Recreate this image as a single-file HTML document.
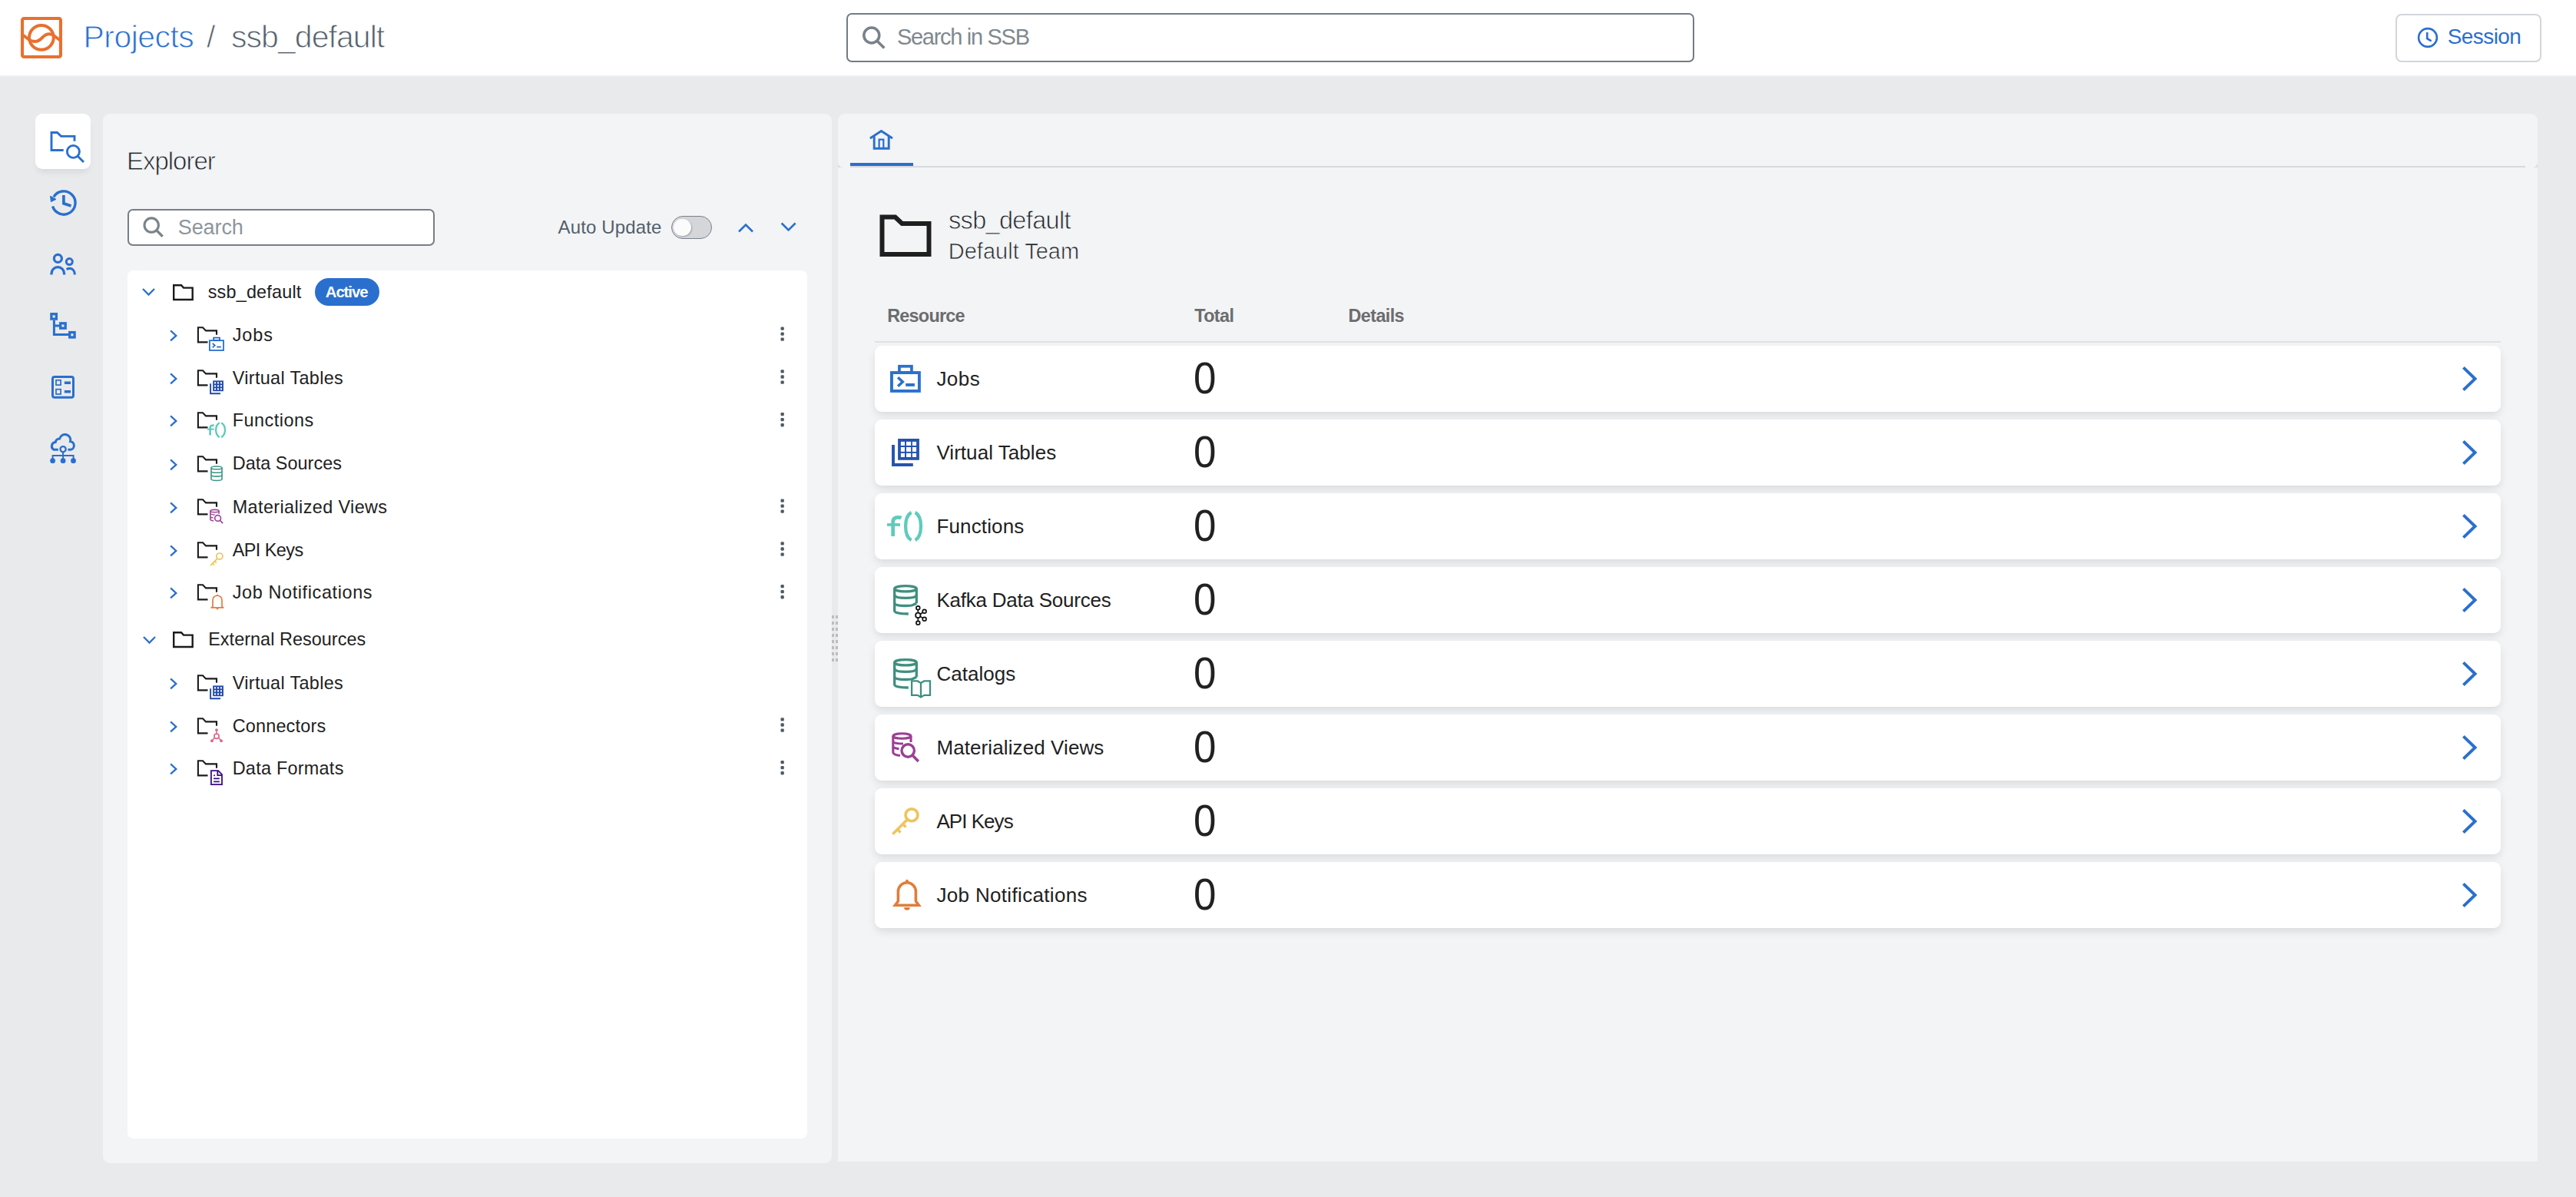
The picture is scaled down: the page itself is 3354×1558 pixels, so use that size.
<!DOCTYPE html>
<html><head><meta charset="utf-8"><title>SSB</title>
<style>
html,body{margin:0;padding:0;}
body{width:3354px;height:1558px;position:relative;overflow:hidden;background:#e9eaec;font-family:"Liberation Sans", sans-serif;}
.t{position:absolute;white-space:nowrap;line-height:1;}
svg{display:block;overflow:visible}
</style></head><body>
<div style="position:absolute;left:0px;top:0px;width:3354px;height:98px;background:#ffffff"></div>
<div style="position:absolute;left:0px;top:98px;width:3354px;height:2.3px;background:#eff0f2"></div>
<svg style="position:absolute;left:27px;top:22px;" width="54" height="54" viewBox="0 0 54 54"><rect x="2.05" y="2.05" width="49.9" height="49.9" rx="2.2" fill="none" stroke="#e8702e" stroke-width="4.1"/><circle cx="26.9" cy="26.8" r="15.9" fill="none" stroke="#e8702e" stroke-width="4"/><path d="M2,23 L10,29 C13,31.3 16,32 19,32 C23,32 25,30 28,27 C31,24 34,22.3 37,22.3 C40,22.3 42,23.3 44,25 L52,31" fill="none" stroke="#e8702e" stroke-width="4"/></svg>
<div class="t" style="left:108.5px;top:27.89px;font-size:41px;color:#2a6fce;font-weight:400;letter-spacing:-0.54px;-webkit-text-stroke:0.9px #fff">Projects</div>
<div class="t" style="left:269.0px;top:27.89px;font-size:41px;color:#56616c;font-weight:400;letter-spacing:0px;-webkit-text-stroke:0.9px #fff">/</div>
<div class="t" style="left:301.0px;top:27.89px;font-size:41px;color:#56616c;font-weight:400;letter-spacing:-0.95px;-webkit-text-stroke:0.9px #fff">ssb_default</div>
<div style="position:absolute;left:1102px;top:17px;width:1104px;height:64px;box-sizing:border-box;border:2px solid #737b83;border-radius:7px;background:#fff"></div>
<svg style="position:absolute;left:1120px;top:31px;" width="36" height="36" viewBox="0 0 36 36"><circle cx="14.8" cy="15" r="10" fill="none" stroke="#79818a" stroke-width="3.5"/><path d="M22.2,22.4 L31.3,31.5" stroke="#79818a" stroke-width="3.6"/></svg>
<div class="t" style="left:1168.0px;top:33.85px;font-size:29px;color:#80888f;font-weight:400;letter-spacing:-1.3px;">Search in SSB</div>
<div style="position:absolute;left:3119px;top:17.5px;width:190px;height:63px;box-sizing:border-box;border:2px solid #d3d5d9;border-radius:8px;background:#fff"></div>
<svg style="position:absolute;left:3144px;top:33px;" width="32" height="32" viewBox="0 0 32 32"><circle cx="17" cy="16" r="11.9" fill="none" stroke="#2a6fce" stroke-width="2.6"/><path d="M16.2,9 V17.2 L21.6,20.4" fill="none" stroke="#2a6fce" stroke-width="2.6"/></svg>
<div class="t" style="left:3186.8px;top:34.19px;font-size:28px;color:#2a6fce;font-weight:400;letter-spacing:-0.6px;">Session</div>
<div style="position:absolute;left:46px;top:148px;width:72px;height:72px;background:#fff;border-radius:9px;box-shadow:0 7px 8px -3px rgba(0,0,0,0.08)"></div>
<svg style="position:absolute;left:60px;top:165px;" width="55" height="55" viewBox="0 0 55 55"><path d="M37,18.8 V12.4 H19.5 L14.5,7.5 H7 V30.5 H22.7" fill="none" stroke="#2a6fce" stroke-width="2.9"/><circle cx="35.4" cy="32.4" r="8" fill="none" stroke="#2a6fce" stroke-width="2.9"/><path d="M41.2,38.2 L49,46" stroke="#2a6fce" stroke-width="2.9"/></svg>
<svg style="position:absolute;left:60px;top:240px;" width="45" height="45" viewBox="0 0 45 45"><path d="M8.55,28.6 A15.1,15.1 0 1 0 9.9,16.4" fill="none" stroke="#2a6fce" stroke-width="3.4"/><path d="M5.6,15.3 L6.4,22.6 L13,19.4 Z" fill="#2a6fce" stroke="#2a6fce" stroke-width="1"/><path d="M22.9,14.1 V24.8 L32.6,28" fill="none" stroke="#2a6fce" stroke-width="3.7"/></svg>
<svg style="position:absolute;left:60px;top:320px;" width="45" height="45" viewBox="0 0 45 45"><circle cx="15.4" cy="16.4" r="5" fill="none" stroke="#2a6fce" stroke-width="3.2"/><circle cx="30.3" cy="20.6" r="4" fill="none" stroke="#2a6fce" stroke-width="3"/><path d="M7,37.6 V36 A8.3,8.3 0 0 1 23.6,36 V37.6" fill="none" stroke="#2a6fce" stroke-width="3.3"/><path d="M26.6,30.6 C28,29.8 29.5,29.4 31,29.4 C34.7,29.4 37.3,32.5 37.3,37.6" fill="none" stroke="#2a6fce" stroke-width="3.1"/></svg>
<svg style="position:absolute;left:60px;top:400px;" width="45" height="45" viewBox="0 0 45 45"><rect x="6.9" y="8.7" width="6.5" height="6.4" fill="none" stroke="#2a6fce" stroke-width="3.3"/><rect x="18.7" y="20.8" width="6.5" height="6.4" fill="none" stroke="#2a6fce" stroke-width="3.3"/><rect x="30.7" y="32.6" width="6.4" height="6.4" fill="none" stroke="#2a6fce" stroke-width="3.3"/><path d="M10.4,16.7 V35.4 H29.1 M10.4,24 H17.1" fill="none" stroke="#2a6fce" stroke-width="3"/></svg>
<svg style="position:absolute;left:60px;top:482px;" width="45" height="45" viewBox="0 0 45 45"><rect x="8.5" y="8.5" width="27" height="26.8" rx="2.5" fill="none" stroke="#2a6fce" stroke-width="3"/><rect x="13" y="12.8" width="6.1" height="6.3" fill="none" stroke="#2a6fce" stroke-width="1.7"/><rect x="13" y="24.7" width="6.1" height="6.3" fill="none" stroke="#2a6fce" stroke-width="1.7"/><path d="M23.9,16.2 H32 M23.9,27.8 H32" stroke="#2a6fce" stroke-width="3.4"/></svg>
<svg style="position:absolute;left:58px;top:558px;" width="48" height="48" viewBox="0 0 48 48"><path d="M17.8,27.3 H12 A5.2,5.2 0 0 1 14.2,17.6 A5.5,5.5 0 0 1 19.6,12.9 A7.2,7.2 0 0 1 33.6,16.6 A5.4,5.4 0 0 1 33.8,27.3 H30.4" fill="none" stroke="#2a6fce" stroke-width="3"/><circle cx="24.1" cy="26.7" r="3.6" fill="none" stroke="#2a6fce" stroke-width="2.3"/><path d="M24.1,30.3 V40 M10.6,40 V35.1 H37.6 V40" fill="none" stroke="#2a6fce" stroke-width="2"/><circle cx="10.6" cy="41.7" r="3.4" fill="#2a6fce"/><circle cx="24.1" cy="41.7" r="3.4" fill="#2a6fce"/><circle cx="37.5" cy="41.7" r="3.4" fill="#2a6fce"/></svg>
<div style="position:absolute;left:134px;top:148px;width:949px;height:1366px;background:#f3f4f6;border-radius:9px"></div>
<div class="t" style="left:164.9px;top:193.46px;font-size:33px;color:#1d2228;font-weight:400;letter-spacing:-1.0px;-webkit-text-stroke:0.8px #f3f4f6">Explorer</div>
<div style="position:absolute;left:166px;top:272px;width:400px;height:48px;box-sizing:border-box;border:2px solid #767e86;border-radius:7px;background:#fff"></div>
<svg style="position:absolute;left:184px;top:281px;" width="32" height="32" viewBox="0 0 32 32"><circle cx="13.2" cy="12.1" r="9.2" fill="none" stroke="#7b848b" stroke-width="3.1"/><path d="M19.9,18.9 L27.7,26.7" stroke="#7b848b" stroke-width="3.4"/></svg>
<div class="t" style="left:231.8px;top:282.94px;font-size:27px;color:#8d959c;font-weight:400;letter-spacing:-0.1px;">Search</div>
<div class="t" style="left:726.5px;top:284.08px;font-size:24px;color:#535f6b;font-weight:400;letter-spacing:0.15px;">Auto Update</div>
<div style="position:absolute;left:874.4px;top:280.7px;width:52.7px;height:30.3px;box-sizing:border-box;border:1.7px solid #7a8189;border-radius:16px;background:#d5d6da"></div>
<div style="position:absolute;left:877px;top:284.5px;width:22.8px;height:22.8px;border-radius:50%;background:#fbfbfb;box-shadow:1px 1px 2px rgba(0,0,0,0.25)"></div>
<svg style="position:absolute;left:958px;top:284px;" width="28" height="24" viewBox="0 0 28 24"><path d="M4,17.5 L13,8.5 L22,17.5" fill="none" stroke="#2a6fce" stroke-width="2.6"/></svg>
<svg style="position:absolute;left:1013px;top:284px;" width="28" height="24" viewBox="0 0 28 24"><path d="M4.6,6.5 L13.6,15.5 L22.6,6.5" fill="none" stroke="#2a6fce" stroke-width="2.6"/></svg>
<div style="position:absolute;left:166px;top:352px;width:885px;height:1130px;background:#fff;border-radius:8px"></div>
<svg style="position:absolute;left:183.4px;top:371.8px;" width="22" height="16" viewBox="0 0 22 16"><path d="M3,4 L10.5,11.5 L18,4" fill="none" stroke="#2a6fce" stroke-width="2.3"/></svg>
<svg style="position:absolute;left:224.5px;top:369.5px;" width="30" height="24" viewBox="0 0 30 24"><path d="M1.2,1.2 H11 L14,4.6 H25.7 V20 H1.2 Z" fill="none" stroke="#1b1b1b" stroke-width="2.4"/></svg>
<div class="t" style="left:270.7px;top:368.99px;font-size:23.4px;color:#212121;font-weight:400;letter-spacing:0.2px;">ssb_default</div>
<div style="position:absolute;left:410px;top:362px;width:84px;height:36px;background:#2a6fce;border-radius:18px"></div>
<div class="t" style="left:423.8px;top:369.81px;font-size:20.3px;color:#fff;font-weight:700;letter-spacing:-1.05px;">Active</div>
<svg style="position:absolute;left:218.1px;top:426.7px;" width="16" height="20" viewBox="0 0 16 20"><path d="M4.1,3.4 L11.3,9.9 L4.1,16.4" fill="none" stroke="#2a6fce" stroke-width="2.3"/></svg>
<svg style="position:absolute;left:250px;top:420px;margin-top:-0.30px" width="50" height="50" viewBox="0 0 50 50"><path d="M32,15.7 V10.4 H18 L14,6.3 H7.9 V25.4 H20.5" fill="none" stroke="#1b1b1b" stroke-width="2.1"/><rect x="22.9" y="23.2" width="18.1" height="12.8" fill="none" stroke="#1f66c8" stroke-width="1.7"/><rect x="28.2" y="19.599999999999998" width="7.8" height="3.6" fill="none" stroke="#1f66c8" stroke-width="1.7"/><path d="M26.7,26.9 L29.8,29.599999999999998 L26.7,32.300000000000004" fill="none" stroke="#1f66c8" stroke-width="1.6"/><path d="M32.2,31.599999999999998 H37.8" stroke="#1f66c8" stroke-width="1.7"/></svg>
<div class="t" style="left:302.7px;top:424.69px;font-size:23.4px;color:#212121;font-weight:400;letter-spacing:0.97px;">Jobs</div>
<svg style="position:absolute;left:1016px;top:425px;" width="6" height="20" viewBox="0 0 6 20"><rect x="0.5" y="0.40" width="4.3" height="4.3" rx="1.3" fill="#4f5961"/><rect x="0.5" y="7.45" width="4.3" height="4.3" rx="1.3" fill="#4f5961"/><rect x="0.5" y="14.50" width="4.3" height="4.3" rx="1.3" fill="#4f5961"/></svg>
<svg style="position:absolute;left:218.1px;top:482.6px;" width="16" height="20" viewBox="0 0 16 20"><path d="M4.1,3.4 L11.3,9.9 L4.1,16.4" fill="none" stroke="#2a6fce" stroke-width="2.3"/></svg>
<svg style="position:absolute;left:250px;top:476px;margin-top:-0.40px" width="50" height="50" viewBox="0 0 50 50"><path d="M32,15.7 V10.4 H18 L14,6.3 H7.9 V25.4 H20.5" fill="none" stroke="#1b1b1b" stroke-width="2.1"/><rect x="27.2" y="19.4" width="13.7" height="13.8" fill="#2149ad"/><rect x="29.00" y="21.30" width="2.1" height="2.1" fill="#fff"/><rect x="29.00" y="25.30" width="2.1" height="2.1" fill="#fff"/><rect x="29.00" y="29.30" width="2.1" height="2.1" fill="#fff"/><rect x="32.95" y="21.30" width="2.1" height="2.1" fill="#fff"/><rect x="32.95" y="25.30" width="2.1" height="2.1" fill="#fff"/><rect x="32.95" y="29.30" width="2.1" height="2.1" fill="#fff"/><rect x="36.90" y="21.30" width="2.1" height="2.1" fill="#fff"/><rect x="36.90" y="25.30" width="2.1" height="2.1" fill="#fff"/><rect x="36.90" y="29.30" width="2.1" height="2.1" fill="#fff"/><path d="M24.1,23.2 V36.3 H37" fill="none" stroke="#2149ad" stroke-width="1.9"/></svg>
<div class="t" style="left:302.7px;top:480.59px;font-size:23.4px;color:#212121;font-weight:400;letter-spacing:0.35px;">Virtual Tables</div>
<svg style="position:absolute;left:1016px;top:480px;" width="6" height="20" viewBox="0 0 6 20"><rect x="0.5" y="1.30" width="4.3" height="4.3" rx="1.3" fill="#4f5961"/><rect x="0.5" y="8.35" width="4.3" height="4.3" rx="1.3" fill="#4f5961"/><rect x="0.5" y="15.40" width="4.3" height="4.3" rx="1.3" fill="#4f5961"/></svg>
<svg style="position:absolute;left:218.1px;top:538.3px;" width="16" height="20" viewBox="0 0 16 20"><path d="M4.1,3.4 L11.3,9.9 L4.1,16.4" fill="none" stroke="#2a6fce" stroke-width="2.3"/></svg>
<svg style="position:absolute;left:250px;top:531px;margin-top:0.30px" width="50" height="50" viewBox="0 0 50 50"><path d="M32,15.7 V10.4 H18 L14,6.3 H7.9 V25.4 H20.5" fill="none" stroke="#1b1b1b" stroke-width="2.1"/><path d="M23.6,35.5 V25.7 C23.6,23.5 25.5,22.5 28.7,22.5" fill="none" stroke="#5ccbb9" stroke-width="2.5"/><path d="M20,27.7 H28.8" stroke="#5ccbb9" stroke-width="1.9"/><path d="M35.7,19.2 C32,21.7 31.1,25.7 31.1,28.599999999999998 C31.1,31.7 32,35.7 35.7,38.2" fill="none" stroke="#5ccbb9" stroke-width="2.3"/><path d="M38.2,19.2 C42,21.7 43,25.7 43,28.599999999999998 C43,31.7 42,35.7 38.2,38.2" fill="none" stroke="#5ccbb9" stroke-width="2.3"/></svg>
<div class="t" style="left:302.7px;top:536.29px;font-size:23.4px;color:#212121;font-weight:400;letter-spacing:0.5px;">Functions</div>
<svg style="position:absolute;left:1016px;top:536px;" width="6" height="20" viewBox="0 0 6 20"><rect x="0.5" y="1.00" width="4.3" height="4.3" rx="1.3" fill="#4f5961"/><rect x="0.5" y="8.05" width="4.3" height="4.3" rx="1.3" fill="#4f5961"/><rect x="0.5" y="15.10" width="4.3" height="4.3" rx="1.3" fill="#4f5961"/></svg>
<svg style="position:absolute;left:218.1px;top:594.5px;" width="16" height="20" viewBox="0 0 16 20"><path d="M4.1,3.4 L11.3,9.9 L4.1,16.4" fill="none" stroke="#2a6fce" stroke-width="2.3"/></svg>
<svg style="position:absolute;left:250px;top:588px;margin-top:-0.50px" width="50" height="50" viewBox="0 0 50 50"><path d="M32,15.7 V10.4 H18 L14,6.3 H7.9 V25.4 H20.5" fill="none" stroke="#1b1b1b" stroke-width="2.1"/><ellipse cx="32" cy="20.9" rx="7.0" ry="1.9" fill="none" stroke="#3d9585" stroke-width="1.6"/><path d="M25,20.9 V35.8 C25,38.0 39,38.0 39,35.8 V20.9" fill="none" stroke="#3d9585" stroke-width="1.6"/><path d="M25,25.4 C25,27.8 39,27.8 39,25.4 M25,30.299999999999997 C25,32.7 39,32.7 39,30.299999999999997" fill="none" stroke="#3d9585" stroke-width="1.6"/></svg>
<div class="t" style="left:302.7px;top:592.49px;font-size:23.4px;color:#212121;font-weight:400;letter-spacing:0.05px;">Data Sources</div>
<svg style="position:absolute;left:218.1px;top:650.7px;" width="16" height="20" viewBox="0 0 16 20"><path d="M4.1,3.4 L11.3,9.9 L4.1,16.4" fill="none" stroke="#2a6fce" stroke-width="2.3"/></svg>
<svg style="position:absolute;left:250px;top:644px;margin-top:-0.30px" width="50" height="50" viewBox="0 0 50 50"><path d="M32,15.7 V10.4 H18 L14,6.3 H7.9 V25.4 H20.5" fill="none" stroke="#1b1b1b" stroke-width="2.1"/><ellipse cx="29.5" cy="21.1" rx="5.6" ry="1.7" fill="none" stroke="#a0449a" stroke-width="1.6"/><path d="M23.9,21.1 V32.0 C23.9,33.1 26,33.7 28,33.9" fill="none" stroke="#a0449a" stroke-width="1.6"/><path d="M35.1,21.1 V24.8" fill="none" stroke="#a0449a" stroke-width="1.6"/><path d="M23.9,24.5 C24.5,25.7 27,25.9 29.7,25.9 M23.9,28.700000000000003 C24.5,29.799999999999997 26,30.0 27.6,30.1" fill="none" stroke="#a0449a" stroke-width="1.5"/><circle cx="33.6" cy="30.5" r="3.9" fill="none" stroke="#a0449a" stroke-width="1.7"/><path d="M36.4,33.4 L40.1,37.1" stroke="#a0449a" stroke-width="1.8"/></svg>
<div class="t" style="left:302.7px;top:648.69px;font-size:23.4px;color:#212121;font-weight:400;letter-spacing:0.4px;">Materialized Views</div>
<svg style="position:absolute;left:1016px;top:649px;" width="6" height="20" viewBox="0 0 6 20"><rect x="0.5" y="0.40" width="4.3" height="4.3" rx="1.3" fill="#4f5961"/><rect x="0.5" y="7.45" width="4.3" height="4.3" rx="1.3" fill="#4f5961"/><rect x="0.5" y="14.50" width="4.3" height="4.3" rx="1.3" fill="#4f5961"/></svg>
<svg style="position:absolute;left:218.1px;top:706.6px;" width="16" height="20" viewBox="0 0 16 20"><path d="M4.1,3.4 L11.3,9.9 L4.1,16.4" fill="none" stroke="#2a6fce" stroke-width="2.3"/></svg>
<svg style="position:absolute;left:250px;top:700px;margin-top:-0.40px" width="50" height="50" viewBox="0 0 50 50"><path d="M32,15.7 V10.4 H18 L14,6.3 H7.9 V25.4 H20.5" fill="none" stroke="#1b1b1b" stroke-width="2.1"/><circle cx="35.9" cy="24.1" r="4.1" fill="none" stroke="#efc35c" stroke-width="1.7"/><path d="M32.9,27.1 L24,36.099999999999994 M29.6,30.400000000000002 L31.9,32.699999999999996 M26.8,33.199999999999996 L29,35.4" fill="none" stroke="#efc35c" stroke-width="1.7"/></svg>
<div class="t" style="left:302.7px;top:704.59px;font-size:23.4px;color:#212121;font-weight:400;letter-spacing:-0.54px;">API Keys</div>
<svg style="position:absolute;left:1016px;top:704px;" width="6" height="20" viewBox="0 0 6 20"><rect x="0.5" y="1.30" width="4.3" height="4.3" rx="1.3" fill="#4f5961"/><rect x="0.5" y="8.35" width="4.3" height="4.3" rx="1.3" fill="#4f5961"/><rect x="0.5" y="15.40" width="4.3" height="4.3" rx="1.3" fill="#4f5961"/></svg>
<svg style="position:absolute;left:218.1px;top:762.3px;" width="16" height="20" viewBox="0 0 16 20"><path d="M4.1,3.4 L11.3,9.9 L4.1,16.4" fill="none" stroke="#2a6fce" stroke-width="2.3"/></svg>
<svg style="position:absolute;left:250px;top:755px;margin-top:0.30px" width="50" height="50" viewBox="0 0 50 50"><path d="M32,15.7 V10.4 H18 L14,6.3 H7.9 V25.4 H20.5" fill="none" stroke="#1b1b1b" stroke-width="2.1"/><path d="M33,18.740000000000002 V20.240000000000002" stroke="#e07e3b" stroke-width="1.8"/><path d="M27,34.44 V25.94 A6,5.7 0 0 1 39,25.94 V34.44 L40.8,35.94 H25.2 Z" fill="none" stroke="#e07e3b" stroke-width="1.7" stroke-linejoin="round"/><path d="M31.3,36.839999999999996 A1.7,1.7 0 0 0 34.7,36.839999999999996 Z" fill="#e07e3b"/></svg>
<div class="t" style="left:302.7px;top:760.29px;font-size:23.4px;color:#212121;font-weight:400;letter-spacing:0.64px;">Job Notifications</div>
<svg style="position:absolute;left:1016px;top:760px;" width="6" height="20" viewBox="0 0 6 20"><rect x="0.5" y="1.00" width="4.3" height="4.3" rx="1.3" fill="#4f5961"/><rect x="0.5" y="8.05" width="4.3" height="4.3" rx="1.3" fill="#4f5961"/><rect x="0.5" y="15.10" width="4.3" height="4.3" rx="1.3" fill="#4f5961"/></svg>
<svg style="position:absolute;left:184px;top:825.4px;" width="22" height="16" viewBox="0 0 22 16"><path d="M3,4 L10.5,11.5 L18,4" fill="none" stroke="#2a6fce" stroke-width="2.3"/></svg>
<svg style="position:absolute;left:224.5px;top:822.4px;" width="30" height="24" viewBox="0 0 30 24"><path d="M1.2,1.2 H11 L14,4.6 H25.7 V20 H1.2 Z" fill="none" stroke="#1b1b1b" stroke-width="2.4"/></svg>
<div class="t" style="left:271.2px;top:821.49px;font-size:23.4px;color:#212121;font-weight:400;letter-spacing:0.05px;">External Resources</div>
<svg style="position:absolute;left:218.1px;top:879.7px;" width="16" height="20" viewBox="0 0 16 20"><path d="M4.1,3.4 L11.3,9.9 L4.1,16.4" fill="none" stroke="#2a6fce" stroke-width="2.3"/></svg>
<svg style="position:absolute;left:250px;top:873px;margin-top:-0.30px" width="50" height="50" viewBox="0 0 50 50"><path d="M32,15.7 V10.4 H18 L14,6.3 H7.9 V25.4 H20.5" fill="none" stroke="#1b1b1b" stroke-width="2.1"/><rect x="27.2" y="19.4" width="13.7" height="13.8" fill="#2149ad"/><rect x="29.00" y="21.30" width="2.1" height="2.1" fill="#fff"/><rect x="29.00" y="25.30" width="2.1" height="2.1" fill="#fff"/><rect x="29.00" y="29.30" width="2.1" height="2.1" fill="#fff"/><rect x="32.95" y="21.30" width="2.1" height="2.1" fill="#fff"/><rect x="32.95" y="25.30" width="2.1" height="2.1" fill="#fff"/><rect x="32.95" y="29.30" width="2.1" height="2.1" fill="#fff"/><rect x="36.90" y="21.30" width="2.1" height="2.1" fill="#fff"/><rect x="36.90" y="25.30" width="2.1" height="2.1" fill="#fff"/><rect x="36.90" y="29.30" width="2.1" height="2.1" fill="#fff"/><path d="M24.1,23.2 V36.3 H37" fill="none" stroke="#2149ad" stroke-width="1.9"/></svg>
<div class="t" style="left:302.7px;top:877.69px;font-size:23.4px;color:#212121;font-weight:400;letter-spacing:0.35px;">Virtual Tables</div>
<svg style="position:absolute;left:218.1px;top:935.6px;" width="16" height="20" viewBox="0 0 16 20"><path d="M4.1,3.4 L11.3,9.9 L4.1,16.4" fill="none" stroke="#2a6fce" stroke-width="2.3"/></svg>
<svg style="position:absolute;left:250px;top:929px;margin-top:-0.40px" width="50" height="50" viewBox="0 0 50 50"><path d="M32,15.7 V10.4 H18 L14,6.3 H7.9 V25.4 H20.5" fill="none" stroke="#1b1b1b" stroke-width="2.1"/><circle cx="32" cy="29.3" r="3.1" fill="none" stroke="#dc6a8d" stroke-width="1.7"/><path d="M32,21.1 V26.2 M29.4,31.2 L25.9,35.3 M34.6,31.2 L38,35.3" stroke="#dc6a8d" stroke-width="1.5"/><circle cx="32" cy="21.1" r="1.95" fill="#dc6a8d"/><circle cx="25.9" cy="35.3" r="1.95" fill="#dc6a8d"/><circle cx="38" cy="35.3" r="1.95" fill="#dc6a8d"/></svg>
<div class="t" style="left:302.7px;top:933.59px;font-size:23.4px;color:#212121;font-weight:400;letter-spacing:0.2px;">Connectors</div>
<svg style="position:absolute;left:1016px;top:934px;" width="6" height="20" viewBox="0 0 6 20"><rect x="0.5" y="0.30" width="4.3" height="4.3" rx="1.3" fill="#4f5961"/><rect x="0.5" y="7.35" width="4.3" height="4.3" rx="1.3" fill="#4f5961"/><rect x="0.5" y="14.40" width="4.3" height="4.3" rx="1.3" fill="#4f5961"/></svg>
<svg style="position:absolute;left:218.1px;top:991.3px;" width="16" height="20" viewBox="0 0 16 20"><path d="M4.1,3.4 L11.3,9.9 L4.1,16.4" fill="none" stroke="#2a6fce" stroke-width="2.3"/></svg>
<svg style="position:absolute;left:250px;top:984px;margin-top:0.30px" width="50" height="50" viewBox="0 0 50 50"><path d="M32,15.7 V10.4 H18 L14,6.3 H7.9 V25.4 H20.5" fill="none" stroke="#1b1b1b" stroke-width="2.1"/><path d="M24.9,19.2 H34.2 L39,24.1 V37.199999999999996 H24.9 Z" fill="none" stroke="#3b0d88" stroke-width="1.8"/><path d="M33.3,19.2 V25.1 H39" fill="none" stroke="#3b0d88" stroke-width="1.8"/><rect x="28.1" y="24.5" width="1.9" height="1.7" fill="#3b0d88"/><path d="M28.1,29.3 H35.8 M28.1,33.3 H35.8" stroke="#3b0d88" stroke-width="1.8"/></svg>
<div class="t" style="left:302.7px;top:989.29px;font-size:23.4px;color:#212121;font-weight:400;letter-spacing:0.27px;">Data Formats</div>
<svg style="position:absolute;left:1016px;top:989px;" width="6" height="20" viewBox="0 0 6 20"><rect x="0.5" y="1.00" width="4.3" height="4.3" rx="1.3" fill="#4f5961"/><rect x="0.5" y="8.05" width="4.3" height="4.3" rx="1.3" fill="#4f5961"/><rect x="0.5" y="15.10" width="4.3" height="4.3" rx="1.3" fill="#4f5961"/></svg>
<div style="position:absolute;left:1083px;top:801px;width:8px;height:60px;background:#e9eaec"></div>
<div style="position:absolute;left:1083px;top:801px;width:8px;height:60px;background:linear-gradient(90deg,#bdbdbd 0 3px,transparent 3px 5px,#bdbdbd 5px 8px);-webkit-mask:linear-gradient(180deg,#000 0 4px,transparent 4px 8px) 0 0/8px 8px repeat-y"></div>
<div style="position:absolute;left:1091px;top:148px;width:2213px;height:1364px;background:#f3f4f6;border-radius:9px 9px 0 0"></div>
<svg style="position:absolute;left:1128px;top:165px;" width="40" height="34" viewBox="0 0 40 34"><path d="M4.9,14.9 L19.45,5.6 L34,14.9" fill="none" stroke="#2a6fce" stroke-width="3"/><path d="M10.2,12.2 V28.3 H29.2 V12.2" fill="none" stroke="#2a6fce" stroke-width="2.9"/><path d="M16.6,28.3 V16.7 H22.3 V28.3" fill="none" stroke="#2a6fce" stroke-width="2.2"/></svg>
<div style="position:absolute;left:1106.7px;top:211.5px;width:82.3px;height:4.5px;background:#2a6fce"></div>
<div style="position:absolute;left:1106.7px;top:216px;width:2181px;height:2.2px;background:#d8d9dc"></div>
<svg style="position:absolute;left:1091px;top:211px;" width="7" height="7" viewBox="0 0 7 7"><path d="M0,0 A7,7 0 0 0 7,7 H0 Z" fill="#dcdde0"/></svg>
<svg style="position:absolute;left:3297px;top:211px;" width="7" height="7" viewBox="0 0 7 7"><path d="M7,0 A7,7 0 0 1 0,7 H7 Z" fill="#dcdde0"/></svg>
<svg style="position:absolute;left:1144px;top:278px;" width="72" height="58" viewBox="0 0 72 58"><path d="M4.5,4.5 H21.5 L30.5,13 H65.5 V53 H4.5 Z" fill="none" stroke="#1f1f1f" stroke-width="6"/></svg>
<div class="t" style="left:1235.0px;top:270.78px;font-size:32.5px;color:#212429;font-weight:400;letter-spacing:-0.67px;-webkit-text-stroke:0.8px #f3f4f6">ssb_default</div>
<div class="t" style="left:1234.8px;top:313.25px;font-size:29px;color:#212429;font-weight:400;letter-spacing:0.0px;-webkit-text-stroke:0.7px #f3f4f6">Default Team</div>
<div class="t" style="left:1155.2px;top:400.19px;font-size:23.4px;color:#6b6c6e;font-weight:700;letter-spacing:-0.75px;">Resource</div>
<div class="t" style="left:1555.2px;top:400.19px;font-size:23.4px;color:#6b6c6e;font-weight:700;letter-spacing:-0.6px;">Total</div>
<div class="t" style="left:1755.5px;top:400.19px;font-size:23.4px;color:#6b6c6e;font-weight:700;letter-spacing:-0.6px;">Details</div>
<div style="position:absolute;left:1139px;top:444px;width:2117px;height:2px;background:#e0e1e3"></div>
<div style="position:absolute;left:1139px;top:450px;width:2117px;height:86px;background:#fff;border-radius:9px;box-shadow:0 5px 12px -1px rgba(0,0,0,0.11)"></div>
<svg style="position:absolute;left:1150px;top:465px;" width="62" height="64" viewBox="0 0 62 64"><rect x="10.95" y="20.05" width="35.95" height="23.9" fill="none" stroke="#2a71cc" stroke-width="3.9"/><rect x="20.95" y="11.75" width="16" height="8.3" fill="none" stroke="#2a71cc" stroke-width="3.7"/><path d="M19.1,26.2 L25.3,31.95 L19.1,37.7" fill="none" stroke="#2a71cc" stroke-width="3.5"/><rect x="29.2" y="34" width="11.7" height="3.9" fill="#2a71cc"/></svg>
<div class="t" style="left:1219.4px;top:479.99px;font-size:26px;color:#212121;font-weight:400;letter-spacing:0.48px;">Jobs</div>
<div class="t" style="left:1554.4px;top:464.24px;font-size:57px;color:#212121;font-weight:400;letter-spacing:0px;transform:scaleX(0.93);transform-origin:0 0">0</div>
<svg style="position:absolute;left:3200px;top:472px;" width="32" height="42" viewBox="0 0 32 42"><path d="M7.4,6.3 L22.6,21 L7.4,35.7" fill="none" stroke="#2a6fce" stroke-width="3.9"/></svg>
<div style="position:absolute;left:1139px;top:546px;width:2117px;height:86px;background:#fff;border-radius:9px;box-shadow:0 5px 12px -1px rgba(0,0,0,0.11)"></div>
<svg style="position:absolute;left:1150px;top:560px;" width="62" height="64" viewBox="0 0 62 64"><rect x="19.1" y="11" width="27.8" height="27.8" fill="#2553b0"/><rect x="22.9" y="14.9" width="5.1" height="5.1" fill="#fff"/><rect x="22.9" y="22.0" width="5.1" height="5.9" fill="#fff"/><rect x="22.9" y="29.9" width="5.1" height="5.1" fill="#fff"/><rect x="30.0" y="14.9" width="6.1" height="5.1" fill="#fff"/><rect x="30.0" y="22.0" width="6.1" height="5.9" fill="#fff"/><rect x="30.0" y="29.9" width="6.1" height="5.1" fill="#fff"/><rect x="37.9" y="14.9" width="5.2" height="5.1" fill="#fff"/><rect x="37.9" y="22.0" width="5.2" height="5.9" fill="#fff"/><rect x="37.9" y="29.9" width="5.2" height="5.1" fill="#fff"/><path d="M13,19.1 V44.95 H38.8" fill="none" stroke="#2553b0" stroke-width="3.9"/></svg>
<div class="t" style="left:1219.4px;top:575.99px;font-size:26px;color:#212121;font-weight:400;letter-spacing:0.05px;">Virtual Tables</div>
<div class="t" style="left:1554.4px;top:560.24px;font-size:57px;color:#212121;font-weight:400;letter-spacing:0px;transform:scaleX(0.93);transform-origin:0 0">0</div>
<svg style="position:absolute;left:3200px;top:568px;" width="32" height="42" viewBox="0 0 32 42"><path d="M7.4,6.3 L22.6,21 L7.4,35.7" fill="none" stroke="#2a6fce" stroke-width="3.9"/></svg>
<div style="position:absolute;left:1139px;top:642px;width:2117px;height:86px;background:#fff;border-radius:9px;box-shadow:0 5px 12px -1px rgba(0,0,0,0.11)"></div>
<svg style="position:absolute;left:1150px;top:655px;" width="62" height="64" viewBox="0 0 62 64"><path d="M12.65,42.9 V24.5 C12.65,19.5 15.5,18.3 19,18.3 C21,18.3 22.5,18.5 23.6,18.9" fill="none" stroke="#5fcbbb" stroke-width="4.7"/><path d="M5,28 H22" stroke="#5fcbbb" stroke-width="3.7"/><path d="M36.6,12 C31,15 29.1,23 29.1,30 C29.1,37 31,45 36.6,48" fill="none" stroke="#5fcbbb" stroke-width="4.3"/><path d="M41.6,12 C47.2,15 49,23 49,30 C49,37 47.2,45 41.6,48" fill="none" stroke="#5fcbbb" stroke-width="4.3"/></svg>
<div class="t" style="left:1219.4px;top:671.99px;font-size:26px;color:#212121;font-weight:400;letter-spacing:0.15px;">Functions</div>
<div class="t" style="left:1554.4px;top:656.24px;font-size:57px;color:#212121;font-weight:400;letter-spacing:0px;transform:scaleX(0.93);transform-origin:0 0">0</div>
<svg style="position:absolute;left:3200px;top:664px;" width="32" height="42" viewBox="0 0 32 42"><path d="M7.4,6.3 L22.6,21 L7.4,35.7" fill="none" stroke="#2a6fce" stroke-width="3.9"/></svg>
<div style="position:absolute;left:1139px;top:738px;width:2117px;height:86px;background:#fff;border-radius:9px;box-shadow:0 5px 12px -1px rgba(0,0,0,0.11)"></div>
<svg style="position:absolute;left:1155px;top:752px;" width="62" height="64" viewBox="0 0 62 64"><ellipse cx="24" cy="14.3" rx="14.3" ry="3.6" fill="none" stroke="#3f8f80" stroke-width="3.3"/><path d="M9.7,14.3 V43 C9.7,45.8 18,47 27.8,47" fill="none" stroke="#3f8f80" stroke-width="3.3"/><path d="M38.3,14.3 V33.3" fill="none" stroke="#3f8f80" stroke-width="3.3"/><path d="M9.7,23 C11,25.5 17,26.4 24,26.4 C31,26.4 37,25.5 38.3,23" fill="none" stroke="#3f8f80" stroke-width="3.3"/><path d="M9.7,33.5 C11,36 17,36.5 24,36.5 C29,36.5 32,36 33.5,35.5 L38.3,33.3" fill="none" stroke="#3f8f80" stroke-width="3.3"/><circle cx="40.3" cy="48.9" r="3.2" fill="none" stroke="#111" stroke-width="1.8"/><circle cx="40.3" cy="39.2" r="2.4" fill="none" stroke="#111" stroke-width="1.7"/><circle cx="40.3" cy="58.7" r="2.4" fill="none" stroke="#111" stroke-width="1.7"/><circle cx="48.6" cy="43.8" r="2.4" fill="none" stroke="#111" stroke-width="1.7"/><circle cx="48.6" cy="53.7" r="2.4" fill="none" stroke="#111" stroke-width="1.7"/><path d="M40.3,41.6 V45.7 M40.3,52.1 V56.3 M43.2,47.5 L46.4,45.2 M43.2,50.3 L46.4,52.4" stroke="#111" stroke-width="1.6"/></svg>
<div class="t" style="left:1219.4px;top:767.99px;font-size:26px;color:#212121;font-weight:400;letter-spacing:-0.23px;">Kafka Data Sources</div>
<div class="t" style="left:1554.4px;top:752.24px;font-size:57px;color:#212121;font-weight:400;letter-spacing:0px;transform:scaleX(0.93);transform-origin:0 0">0</div>
<svg style="position:absolute;left:3200px;top:760px;" width="32" height="42" viewBox="0 0 32 42"><path d="M7.4,6.3 L22.6,21 L7.4,35.7" fill="none" stroke="#2a6fce" stroke-width="3.9"/></svg>
<div style="position:absolute;left:1139px;top:834px;width:2117px;height:86px;background:#fff;border-radius:9px;box-shadow:0 5px 12px -1px rgba(0,0,0,0.11)"></div>
<svg style="position:absolute;left:1155px;top:848px;" width="62" height="64" viewBox="0 0 62 64"><ellipse cx="24" cy="14.3" rx="14.3" ry="3.6" fill="none" stroke="#3f8f80" stroke-width="3.3"/><path d="M9.7,14.3 V43 C9.7,45.8 18,47 27.8,47" fill="none" stroke="#3f8f80" stroke-width="3.3"/><path d="M38.3,14.3 V33.3" fill="none" stroke="#3f8f80" stroke-width="3.3"/><path d="M9.7,23 C11,25.5 17,26.4 24,26.4 C31,26.4 37,25.5 38.3,23" fill="none" stroke="#3f8f80" stroke-width="3.3"/><path d="M9.7,33.5 C11,36 17,36.5 24,36.5 C29,36.5 32,36 33.5,35.5 L38.3,33.3" fill="none" stroke="#3f8f80" stroke-width="3.3"/><path d="M32.1,38.4 H39.7 L44,41 L48.3,38.4 H56 V56.8 H48.3 L44,59.5 L39.7,56.8 H32.1 Z M44,41 V59.5" fill="#fff" stroke="#3f8f80" stroke-width="2.3"/></svg>
<div class="t" style="left:1219.4px;top:863.99px;font-size:26px;color:#212121;font-weight:400;letter-spacing:0.05px;">Catalogs</div>
<div class="t" style="left:1554.4px;top:848.24px;font-size:57px;color:#212121;font-weight:400;letter-spacing:0px;transform:scaleX(0.93);transform-origin:0 0">0</div>
<svg style="position:absolute;left:3200px;top:856px;" width="32" height="42" viewBox="0 0 32 42"><path d="M7.4,6.3 L22.6,21 L7.4,35.7" fill="none" stroke="#2a6fce" stroke-width="3.9"/></svg>
<div style="position:absolute;left:1139px;top:930px;width:2117px;height:86px;background:#fff;border-radius:9px;box-shadow:0 5px 12px -1px rgba(0,0,0,0.11)"></div>
<svg style="position:absolute;left:1155px;top:945px;" width="62" height="64" viewBox="0 0 62 64"><ellipse cx="19.4" cy="13" rx="11.6" ry="3.3" fill="none" stroke="#9c3f94" stroke-width="3.1"/><path d="M7.8,13 V34.3 C7.8,36.8 12,38 17,38.5" fill="none" stroke="#9c3f94" stroke-width="3.1"/><path d="M31,13 V21" fill="none" stroke="#9c3f94" stroke-width="3.1"/><path d="M7.8,20.5 C9,22.5 14,23 21,23 M7.8,27.3 C9,28.8 12,29.3 15.5,29.6" fill="none" stroke="#9c3f94" stroke-width="3.1"/><circle cx="27.2" cy="32" r="8.2" fill="none" stroke="#9c3f94" stroke-width="3.4"/><path d="M33.2,38.3 L40.8,46" stroke="#9c3f94" stroke-width="3.6"/></svg>
<div class="t" style="left:1219.4px;top:959.99px;font-size:26px;color:#212121;font-weight:400;letter-spacing:0.1px;">Materialized Views</div>
<div class="t" style="left:1554.4px;top:944.24px;font-size:57px;color:#212121;font-weight:400;letter-spacing:0px;transform:scaleX(0.93);transform-origin:0 0">0</div>
<svg style="position:absolute;left:3200px;top:952px;" width="32" height="42" viewBox="0 0 32 42"><path d="M7.4,6.3 L22.6,21 L7.4,35.7" fill="none" stroke="#2a6fce" stroke-width="3.9"/></svg>
<div style="position:absolute;left:1139px;top:1026px;width:2117px;height:86px;background:#fff;border-radius:9px;box-shadow:0 5px 12px -1px rgba(0,0,0,0.11)"></div>
<svg style="position:absolute;left:1155px;top:1042px;" width="62" height="64" viewBox="0 0 62 64"><circle cx="32" cy="18.8" r="7.95" fill="none" stroke="#eec45e" stroke-width="3.7"/><path d="M26.5,24.5 L7.3,43.7 M20.4,30.6 L24.4,34.6 M13.5,37.5 L17.5,41.5" fill="none" stroke="#eec45e" stroke-width="3.6"/></svg>
<div class="t" style="left:1219.4px;top:1055.99px;font-size:26px;color:#212121;font-weight:400;letter-spacing:-0.95px;">API Keys</div>
<div class="t" style="left:1554.4px;top:1040.24px;font-size:57px;color:#212121;font-weight:400;letter-spacing:0px;transform:scaleX(0.93);transform-origin:0 0">0</div>
<svg style="position:absolute;left:3200px;top:1048px;" width="32" height="42" viewBox="0 0 32 42"><path d="M7.4,6.3 L22.6,21 L7.4,35.7" fill="none" stroke="#2a6fce" stroke-width="3.9"/></svg>
<div style="position:absolute;left:1139px;top:1122px;width:2117px;height:86px;background:#fff;border-radius:9px;box-shadow:0 5px 12px -1px rgba(0,0,0,0.11)"></div>
<svg style="position:absolute;left:1155px;top:1138px;" width="62" height="64" viewBox="0 0 62 64"><circle cx="25.9" cy="8.6" r="1.9" fill="#e07d3b"/><path d="M14.4,35 V22.3 A11.5,11.5 0 0 1 37.4,22.3 V35 L41.3,40.3 H10.5 Z" fill="none" stroke="#e07d3b" stroke-width="3.6" stroke-linejoin="miter"/><path d="M22.1,43 A3.8,3.8 0 0 0 29.7,43 Z" fill="#e07d3b"/></svg>
<div class="t" style="left:1219.4px;top:1151.99px;font-size:26px;color:#212121;font-weight:400;letter-spacing:0.34px;">Job Notifications</div>
<div class="t" style="left:1554.4px;top:1136.24px;font-size:57px;color:#212121;font-weight:400;letter-spacing:0px;transform:scaleX(0.93);transform-origin:0 0">0</div>
<svg style="position:absolute;left:3200px;top:1144px;" width="32" height="42" viewBox="0 0 32 42"><path d="M7.4,6.3 L22.6,21 L7.4,35.7" fill="none" stroke="#2a6fce" stroke-width="3.9"/></svg>
</body></html>
